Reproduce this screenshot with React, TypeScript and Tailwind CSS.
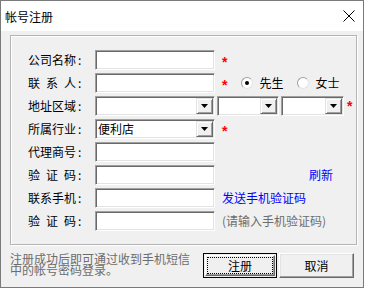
import React from "react"

const font = "font-['SimSun','Noto_Sans_CJK_SC',sans-serif]"

function Label({ chars }: { chars: string[] }) {
    // 4 chars spread over 48px, then a full-width colon cell
    return (
        <div className="w-[60px] shrink-0 flex items-center leading-[12px]">
            <div className="w-[48px] flex justify-between">
                {chars.map((c, i) => (
                    <span key={i}>{c}</span>
                ))}
            </div>
            <span className="w-[12px] pl-[2px]">:</span>
        </div>
    )
}

function Sunken({ w, children }: { w: string; children?: React.ReactNode }) {
    return (
        <div
            className={`${w} h-[20px] shrink-0 bg-white border border-t-[#a0a0a0] border-l-[#a0a0a0] border-b-white border-r-white shadow-[inset_1px_1px_0_#696969,inset_-1px_-1px_0_#e3e3e3] flex items-center`}
        >
            {children}
        </div>
    )
}

function Combo({ w, value }: { w: string; value?: string }) {
    return (
        <Sunken w={w}>
            <span className="flex-1 pl-[2px] leading-[12px]">{value}</span>
            <div className="w-[17px] h-[16px] mr-[1px] bg-[#f0f0f0] border border-t-[#e3e3e3] border-l-[#e3e3e3] border-b-[#696969] border-r-[#696969] shadow-[inset_1px_1px_0_#fff,inset_-1px_-1px_0_#a0a0a0] flex items-center justify-center">
                <svg width="7" height="4" viewBox="0 0 7 4">
                    <path d="M0 0H7L3.5 4Z" fill="#000" />
                </svg>
            </div>
        </Sunken>
    )
}

function Star() {
    return <span className="text-[#ff0000] font-bold text-[14px] leading-[12px] font-['Liberation_Sans',sans-serif] pt-[4px]">*</span>
}

function Radio({ checked, label }: { checked?: boolean; label: string }) {
    return (
        <div className="flex items-center gap-[6px]">
            <div className="w-[12px] h-[12px] rounded-full bg-white border border-t-[#a0a0a0] border-l-[#a0a0a0] border-b-[#e3e3e3] border-r-[#e3e3e3] flex items-center justify-center">
                {checked && <div className="w-[4px] h-[4px] rounded-full bg-black" />}
            </div>
            <span className="leading-[12px]">{label}</span>
        </div>
    )
}

export default function App() {
    return (
        <div className={`w-[365px] h-[289px] bg-white ${font} text-[12px] text-black`}>
            <div className="w-[364px] h-[288px] border border-[#7a7a7a] bg-[#f0f0f0] flex flex-col">
                {/* Title bar */}
                <div className="h-[30px] bg-white flex items-center justify-between pl-[4px] pr-[8px] shrink-0">
                    <span className="leading-[12px] pt-[1px]">帐号注册</span>
                    <svg width="12" height="12" viewBox="0 0 12 12">
                        <path d="M0.5 0.5L11.5 11.5M11.5 0.5L0.5 11.5" stroke="#000" strokeWidth="1" />
                    </svg>
                </div>

                {/* Client */}
                <div className="flex-1 flex flex-col px-[9px] pt-[4px]">
                    <div className="w-[347px] h-[210px] border border-[#b4b4b4] shadow-[inset_1px_1px_0_#fff,1px_1px_0_#fff] pl-[17px] pt-[14px] flex flex-col gap-[3px]">
                        <div className="h-[20px] flex items-center gap-[7px]">
                            <Label chars={["公", "司", "名", "称"]} />
                            <Sunken w="w-[120px]" />
                            <Star />
                        </div>
                        <div className="h-[20px] flex items-center gap-[7px]">
                            <Label chars={["联", "系", "人"]} />
                            <Sunken w="w-[120px]" />
                            <Star />
                            <div className="ml-[7px] flex items-center gap-[14px]">
                                <Radio checked label="先生" />
                                <Radio label="女士" />
                            </div>
                        </div>
                        <div className="h-[20px] flex items-center gap-[7px]">
                            <Label chars={["地", "址", "区", "域"]} />
                            <div className="flex items-center gap-[2px]">
                                <Combo w="w-[120px]" />
                                <Combo w="w-[62px]" />
                                <Combo w="w-[63px]" />
                            </div>
                            <span className="-ml-[4px]"><Star /></span>
                        </div>
                        <div className="h-[20px] flex items-center gap-[7px]">
                            <Label chars={["所", "属", "行", "业"]} />
                            <Combo w="w-[120px]" value="便利店" />
                            <Star />
                        </div>
                        <div className="h-[20px] flex items-center gap-[7px]">
                            <Label chars={["代", "理", "商", "号"]} />
                            <Sunken w="w-[120px]" />
                        </div>
                        <div className="h-[20px] flex items-center gap-[7px]">
                            <Label chars={["验", "证", "码"]} />
                            <Sunken w="w-[120px]" />
                            <span className="ml-[87px] text-[#0000ff] leading-[12px]">刷新</span>
                        </div>
                        <div className="h-[20px] flex items-center gap-[7px]">
                            <Label chars={["联", "系", "手", "机"]} />
                            <Sunken w="w-[120px]" />
                            <span className="text-[#0000ff] leading-[12px]">发送手机验证码</span>
                        </div>
                        <div className="h-[20px] flex items-center gap-[7px]">
                            <Label chars={["验", "证", "码"]} />
                            <Sunken w="w-[120px]" />
                            <span className="text-[#6d6d6d] leading-[12px]">(请输入手机验证码)</span>
                        </div>
                    </div>

                    {/* Bottom */}
                    <div className="flex items-start pt-[8px]">
                        <p className="w-[188px] text-[#6d6d6d] leading-[11px]">
                            注册成功后即可通过收到手机短信中的帐号密码登录。
                        </p>
                        <div className="ml-[9px] flex gap-[2px]">
                            <button className="w-[74px] h-[25px] border border-black bg-[#f0f0f0] p-[1px]">
                                <div className="w-full h-full border border-t-white border-l-white border-b-[#696969] border-r-[#696969] shadow-[inset_-1px_-1px_0_#a0a0a0] p-[1px]">
                                    <div className="w-full h-full border border-dotted border-black flex items-center justify-center leading-[12px]">
                                        注册
                                    </div>
                                </div>
                            </button>
                            <button className="w-[75px] h-[25px] bg-[#f0f0f0] border border-t-white border-l-white border-b-[#696969] border-r-[#696969] shadow-[inset_-1px_-1px_0_#a0a0a0,inset_1px_1px_0_#e3e3e3] flex items-center justify-center leading-[12px]">
                                取消
                            </button>
                        </div>
                    </div>
                </div>
            </div>
        </div>
    )
}
